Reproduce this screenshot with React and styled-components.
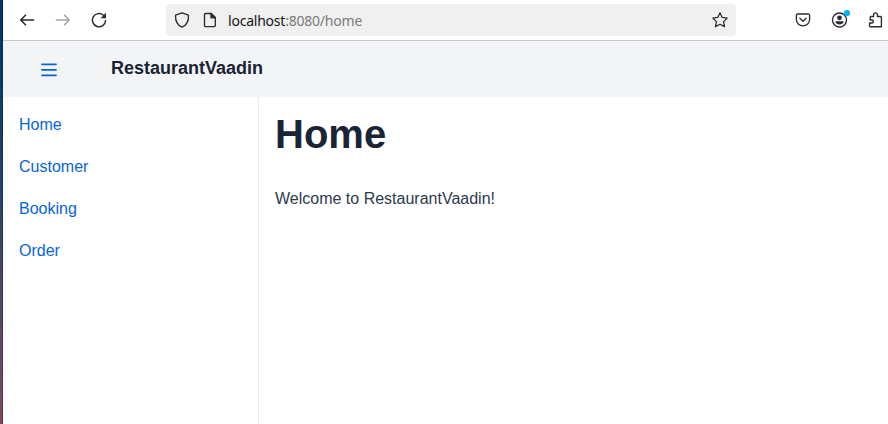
import React from "react";
import styled, { createGlobalStyle } from "styled-components";

const GlobalStyle = createGlobalStyle`
  * { box-sizing: border-box; }
  body { margin: 0; overflow: hidden; background: #fff; }
`;

const Screen = styled.div`
  display: flex;
  width: 888px;
  height: 424px;
  font-family: "Liberation Sans", Arial, sans-serif;
  color: #2c3a4e;
`;

const DesktopEdge = styled.div`
  flex: 0 0 3px;
  border-right: 1px solid rgba(10, 20, 40, 0.35);
  background: linear-gradient(#00366b 0, #08386a 60px, #284468 200px, #554867 310px, #80495f 424px);
`;

const Browser = styled.div`
  flex: 1;
  display: flex;
  flex-direction: column;
  min-width: 0;
`;

const Toolbar = styled.div`
  display: flex;
  align-items: center;
  height: 41px;
  border-bottom: 1px solid #c5c5c7;
  background: #fff;
`;

const NavButtons = styled.div`
  display: flex;
  gap: 20px;
  width: 163px;
  padding-left: 16px;
`;

const Icon = styled.svg`
  display: block;
  flex: none;
  width: 16px;
  height: 16px;
  overflow: visible;
  fill: none;
  stroke: ${(p) => p.$color || "#2b2a33"};
  stroke-width: ${(p) => p.$weight || 1.35};
  stroke-linecap: round;
  stroke-linejoin: round;
`;

const AddressBar = styled.div`
  display: flex;
  align-items: center;
  width: 570px;
  height: 32px;
  padding: 0 8px;
  border-radius: 4px;
  background: #f0f0f0;
`;

const SiteIcons = styled.div`
  display: flex;
  gap: 12px;
`;

const Address = styled.div`
  flex: 1;
  padding: 2px 0 0 10px;
  font: 14px/20px "Noto Sans", sans-serif;
  letter-spacing: -0.22px;
  color: #7a7a7d;
`;

const Host = styled.span`
  color: #15141a;
`;

const Actions = styled.div`
  display: flex;
  gap: 20px;
  padding-left: 59px;
`;

const AppHeader = styled.header`
  display: flex;
  align-items: center;
  height: 56px;
  padding-left: 38px;
  background: #f3f4f6;
`;

const AppTitle = styled.h2`
  margin: 0 0 3px 54px;
  font-size: 18px;
  line-height: 24px;
  font-weight: 700;
  color: #192434;
`;

const AppBody = styled.div`
  display: flex;
  flex: 1;
`;

const Drawer = styled.nav`
  display: flex;
  flex-direction: column;
  align-items: flex-start;
  gap: 16px;
  width: 256px;
  padding: 15px 16px;
  border-right: 1px solid #e8eaee;
`;

const NavLink = styled.a`
  font-size: 16px;
  line-height: 26px;
  color: #0864dc;
  text-decoration: none;
`;

const Content = styled.main`
  flex: 1;
  padding: 12px 16px;
`;

const Heading = styled.h1`
  margin: 0 0 28px;
  font-size: 40px;
  line-height: 50px;
  font-weight: 700;
  color: #192434;
`;

const Message = styled.p`
  margin: 0;
  font-size: 16px;
  line-height: 24px;
`;

const LINKS = ["Home", "Customer", "Booking", "Order"];

export default function App() {
  return (
    <>
      <GlobalStyle />
      <Screen>
        <DesktopEdge />
        <Browser>
          <Toolbar>
            <NavButtons>
              <Icon $weight={1.6}><path d="M14.6 8H1.7M6.5 3.2 1.7 8l4.8 4.8" /></Icon>
              <Icon $weight={1.6} $color="#a5a5a7"><path d="M1.4 8h12.9M9.5 3.2 14.3 8l-4.8 4.8" /></Icon>
              <Icon $weight={1.45}>
                <path d="M12.4 3.2A6.6 6.6 0 1 0 14.6 8.6" />
                <path d="M15 .8v5.4H9.6z" fill="#2b2a33" stroke="none" />
              </Icon>
            </NavButtons>
            <AddressBar>
              <SiteIcons>
                <Icon><path d="M8 .8 14.5 3.2c.2 5.2-1.6 10-6.5 12C3.1 13.2 1.3 8.4 1.5 3.2z" /></Icon>
                <Icon>
                  <path d="M3.6 1.5h5.6l4.1 4.1v7.9a1.1 1.1 0 0 1-1.1 1.1H3.6a1.1 1.1 0 0 1-1.1-1.1V2.6a1.1 1.1 0 0 1 1.1-1.1z" />
                  <path d="M9 1.5v4.3h4.3z" fill="#2b2a33" />
                </Icon>
              </SiteIcons>
              <Address><Host>localhost</Host>:8080/home</Address>
              <Icon $weight={1.25}>
                <path d="m8 .8 2.2 4.6 5 .7-3.6 3.5.9 5L8 12.2l-4.5 2.4.9-5L.8 6.1l5-.7z" />
              </Icon>
            </AddressBar>
            <Actions>
              <Icon>
                <path d="M2.7 2h10.6a1.3 1.3 0 0 1 1.3 1.3V7.5a6.6 6.4 0 0 1-13.2 0V3.3A1.3 1.3 0 0 1 2.7 2z" />
                <path d="m4.9 6.3 3.1 3 3.1-3" />
              </Icon>
              <Icon>
                <circle cx="8.5" cy="8" r="7" />
                <circle cx="8.5" cy="5.8" r="2.4" fill="#2b2a33" stroke="none" />
                <path d="M4.4 9.3h8.2c0 1.9-1.5 3.3-4.1 3.3S4.4 11.2 4.4 9.3z" fill="#2b2a33" stroke="none" />
                <circle cx="16" cy="1" r="3.1" fill="#00b3f4" stroke="none" />
              </Icon>
              <Icon>
                <path d="M14.4 14.7V5.4a.9.9 0 0 0-.9-.9h-3.1V2.7a1.9 1.9 0 0 0-3.8 0v1.8H4.1a.9.9 0 0 0-.9.9V8h1.6a1.5 1.5 0 0 1 0 3H2.5v2.8a.9.9 0 0 0 .9.9z" />
              </Icon>
            </Actions>
          </Toolbar>
          <AppHeader>
            <Icon $color="#0864dc" $weight={1.8}><path d="M1 3.3h14M1 8.8h14M1 14.3h14" /></Icon>
            <AppTitle>RestaurantVaadin</AppTitle>
          </AppHeader>
          <AppBody>
            <Drawer>
              {LINKS.map((label) => <NavLink key={label}>{label}</NavLink>)}
            </Drawer>
            <Content>
              <Heading>Home</Heading>
              <Message>Welcome to RestaurantVaadin!</Message>
            </Content>
          </AppBody>
        </Browser>
      </Screen>
    </>
  );
}
